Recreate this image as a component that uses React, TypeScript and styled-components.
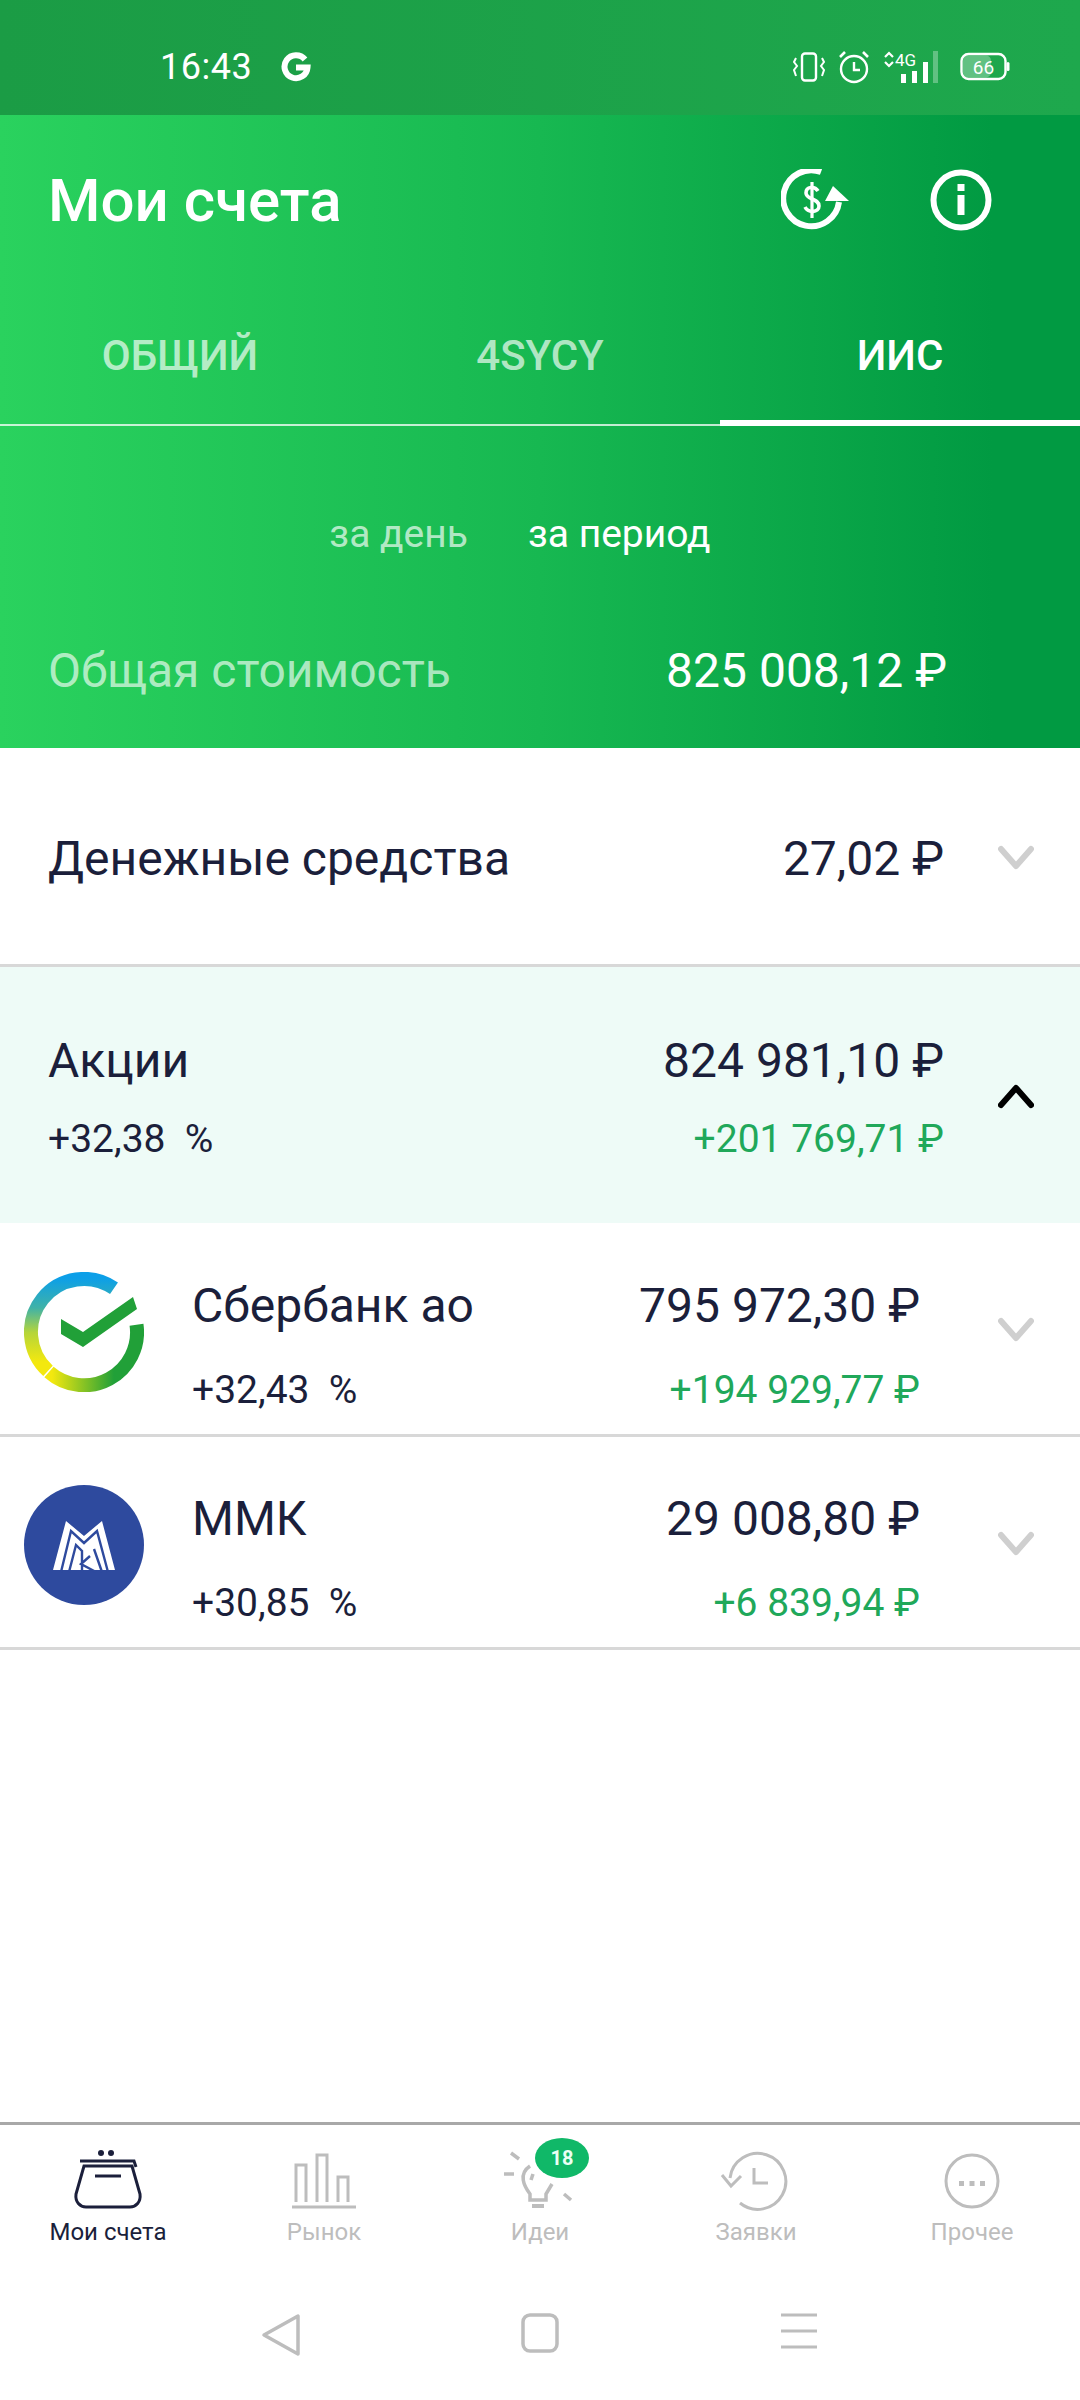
import React from "react";
import styled, { createGlobalStyle } from "styled-components";

const GlobalStyle = createGlobalStyle`
  html, body {
    margin: 0;
    padding: 0;
    background: #fff;
    font-family: Roboto, "Noto Sans", sans-serif;
  }
  * { box-sizing: border-box; }
`;

const Page = styled.div`
  width: 1080px;
  height: 2400px;
  display: flex;
  flex-direction: column;
  background: #fff;
  color: #1b1f3b;
  overflow: hidden;
`;

const StatusBar = styled.div`
  height: 115px;
  flex: none;
  display: flex;
  align-items: center;
  justify-content: space-between;
  padding: 18px 70px 0 160px;
  color: #fff;
  background: linear-gradient(90deg, #1b9c45, #1ea84d);
`;
const StatusLeft = styled.div`
  display: flex;
  align-items: center;
  gap: 29px;
  font-size: 36px;
  letter-spacing: 0.5px;
`;
const StatusRight = styled.div`
  display: flex;
  align-items: center;
  gap: 13px;
`;

const Header = styled.div`
  height: 633px;
  flex: none;
  display: flex;
  flex-direction: column;
  color: #fff;
  background: linear-gradient(90deg, #2ad25e 0%, #17b851 50%, #019a42 92%);
`;
const TitleRow = styled.div`
  height: 170px;
  display: flex;
  align-items: center;
  justify-content: space-between;
  padding: 0 88px 0 48px;
`;
const Title = styled.h1`
  margin: 0;
  font-size: 60px;
  font-weight: 500;
`;
const TitleIcons = styled.div`
  display: flex;
  align-items: center;
  gap: 79px;
`;
const Tabs = styled.div`
  height: 141px;
  display: grid;
  grid-template-columns: repeat(3, 1fr);
  border-bottom: 2px solid rgba(255, 255, 255, 0.75);
`;
const Tab = styled.div<{ $active?: boolean }>`
  display: flex;
  align-items: center;
  justify-content: center;
  height: 141px;
  font-size: 42px;
  font-weight: 500;
  color: ${({ $active }) => ($active ? "#fff" : "rgba(255,255,255,0.68)")};
  box-shadow: ${({ $active }) => ($active ? "inset 0 -6px 0 #fff" : "none")};
`;
const Periods = styled.div`
  display: flex;
  justify-content: center;
  gap: 60px;
  padding: 87px 40px 0 0;
  font-size: 39px;
  line-height: 42px;
`;
const Period = styled.span<{ $active?: boolean }>`
  color: ${({ $active }) => ($active ? "#fff" : "rgba(255,255,255,0.68)")};
`;
const TotalRow = styled.div`
  display: flex;
  justify-content: space-between;
  align-items: center;
  padding: 90px 133px 0 48px;
  font-size: 48px;
  line-height: 52px;
`;
const TotalLabel = styled.span`
  color: rgba(255, 255, 255, 0.65);
`;

const Row = styled.div<{ $tint?: boolean; $height: number; $border?: boolean; $pushDown?: number }>`
  height: ${({ $height }) => $height}px;
  flex: none;
  display: flex;
  align-items: center;
  padding-top: ${({ $pushDown }) => $pushDown ?? 0}px;
  background: ${({ $tint }) => ($tint ? "#eefbf7" : "#fff")};
  border-bottom: ${({ $border }) => ($border ? "3px solid #d8d8d8" : "none")};
`;
const Logo = styled.div`
  width: 120px;
  height: 120px;
  margin: -26px 0 0 24px;
  flex: none;
`;
const RowBody = styled.div<{ $gap: number }>`
  flex: 1;
  display: flex;
  flex-direction: column;
  gap: ${({ $gap }) => $gap}px;
  padding-left: 48px;
`;
const RowLine = styled.div`
  display: flex;
  justify-content: space-between;
  align-items: center;
`;
const Main = styled.span`
  font-size: 48px;
  line-height: 54px;
`;
const Sub = styled.span<{ $green?: boolean }>`
  font-size: 39px;
  line-height: 42px;
  color: ${({ $green }) => ($green ? "#20a85a" : "#1b1f3b")};
  white-space: pre;
`;
const ChevronBox = styled.div<{ $wide?: boolean }>`
  width: ${({ $wide }) => ($wide ? "160px" : "136px")};
  flex: none;
  display: flex;
  justify-content: center;
  padding-left: ${({ $wide }) => ($wide ? "32px" : "8px")};
  margin-top: ${({ $wide }) => ($wide ? "-29px" : "-2px")};
`;

const Spacer = styled.div`
  flex: 1;
`;

const BottomNav = styled.div`
  flex: none;
  height: 155px;
  display: grid;
  grid-template-columns: repeat(5, 1fr);
  border-top: 3px solid #a8a8a8;
  padding-top: 23px;
`;
const NavItem = styled.div<{ $active?: boolean }>`
  position: relative;
  display: flex;
  flex-direction: column;
  align-items: center;
  gap: 3px;
  font-size: 24px;
  line-height: 30px;
  color: ${({ $active }) => ($active ? "#1b1f3b" : "#bdbdbd")};
`;
const Badge = styled.span`
  position: absolute;
  left: 103px;
  top: -10px;
  width: 54px;
  height: 40px;
  border-radius: 50%;
  display: flex;
  align-items: center;
  justify-content: center;
  background: #10b868;
  color: #eafff4;
  font-size: 20px;
  font-weight: 700;
`;
const SystemBar = styled.div`
  flex: none;
  height: 123px;
  display: grid;
  grid-template-columns: repeat(3, 180px);
  justify-content: center;
  gap: 79px;
  justify-items: center;
  padding-top: 36px;
`;

const GoogleG = () => (
  <svg width="30" height="30" viewBox="0 0 30 30" fill="none" stroke="#fff" strokeWidth="6">
    <path d="M24 7.5 A11.5 11.5 0 1 0 26.5 15.5 H15" />
  </svg>
);

const Chevron = ({ up, dark }: { up?: boolean; dark?: boolean }) => (
  <svg width="36" height="26" viewBox="0 0 36 26">
    <path
      d={up ? "M3 22 L18 5 L33 22" : "M3 4 L18 21 L33 4"}
      fill="none"
      stroke={dark ? "#000" : "#cfcfcf"}
      strokeWidth="6"
      strokeLinecap="round"
      strokeLinejoin="round"
    />
  </svg>
);

const RefreshDollar = () => (
  <svg width="70" height="62" viewBox="0 0 70 62">
    <path d="M40 3 A28 28 0 1 0 58 33" fill="none" stroke="#fff" strokeWidth="6" />
    <path d="M52 17 L68 32 L44 32 Z" fill="#fff" />
    <path d="M37 22 C34 17 25 17 25 24 C25 31 38 29 38 37 C38 44 27 44 24 38" fill="none" stroke="#fff" strokeWidth="3.6" />
    <path d="M31 13 V49" stroke="#fff" strokeWidth="3.2" />
  </svg>
);

const InfoCircle = () => (
  <svg width="62" height="62" viewBox="0 0 62 62">
    <circle cx="31" cy="31" r="27.5" fill="none" stroke="#fff" strokeWidth="6" />
    <rect x="27.5" y="15" width="7" height="7" fill="#fff" />
    <rect x="27.5" y="26" width="7" height="20" fill="#fff" />
  </svg>
);

const StatusIcons = () => (
  <>
    <svg width="32" height="30" viewBox="0 0 32 30" fill="none" stroke="#fff">
      <rect x="9" y="1.5" width="14" height="27" rx="3" strokeWidth="2.4" />
      <path d="M3 6 L1 10 L4 14 L1 18 L3 24 M29 6 L31 10 L28 14 L31 18 L29 24" strokeWidth="2" />
    </svg>
    <svg width="32" height="34" viewBox="0 0 32 34" fill="none" stroke="#fff">
      <circle cx="16" cy="19" r="13" strokeWidth="2.4" />
      <path d="M16 12 V20 H22" strokeWidth="2.4" />
      <path d="M2 7 L7 2 M30 7 L25 2" strokeWidth="2.6" />
    </svg>
    <svg width="56" height="34" viewBox="0 0 56 34">
      <path d="M2 7 L6 3 L10 7 M2 12 L6 16 L10 12" fill="none" stroke="#fff" strokeWidth="2.2" />
      <text x="12" y="16" fontSize="17" fill="#fff" fontFamily="Roboto, sans-serif">4G</text>
      <rect x="18" y="24" width="5" height="9" fill="#fff" />
      <rect x="29" y="21" width="5" height="12" fill="#fff" />
      <rect x="40" y="12" width="5" height="21" fill="#fff" />
      <rect x="50" y="1" width="5" height="32" fill="rgba(255,255,255,0.3)" />
    </svg>
    <svg width="50" height="30" viewBox="0 0 50 30" style={{ marginLeft: 8 }}>
      <rect x="1.5" y="2" width="44" height="25" rx="7" fill="none" stroke="#fff" strokeWidth="2.4" />
      <rect x="3" y="3.5" width="28" height="22" rx="5" fill="rgba(255,255,255,0.3)" />
      <rect x="46.5" y="10" width="3" height="9" rx="1.5" fill="#fff" />
      <text x="23.5" y="21.5" fontSize="19" textAnchor="middle" fill="#fff" fontFamily="Roboto, sans-serif">66</text>
    </svg>
  </>
);

const SberLogo = () => (
  <svg width="120" height="120" viewBox="0 0 120 120" fill="none">
    <defs>
      <linearGradient id="sberLeft" gradientUnits="userSpaceOnUse" x1="60" y1="6" x2="60" y2="105">
        <stop offset="0" stopColor="#0c9fe8" />
        <stop offset="0.3" stopColor="#3fb2a8" />
        <stop offset="0.55" stopColor="#b5d53a" />
        <stop offset="0.85" stopColor="#f3e80f" />
        <stop offset="1" stopColor="#f3e80f" />
      </linearGradient>
      <linearGradient id="sberRight" gradientUnits="userSpaceOnUse" x1="28" y1="0" x2="90" y2="0">
        <stop offset="0" stopColor="#f3e80f" />
        <stop offset="1" stopColor="#21a038" />
      </linearGradient>
    </defs>
    <path d="M90 16.3 A53 53 0 0 0 24 98.9" stroke="url(#sberLeft)" strokeWidth="14" />
    <path d="M25 100 A53 53 0 0 0 112.5 52.7" stroke="url(#sberRight)" strokeWidth="14" />
    <path d="M37 47 L59 60 L109 25 L113 37 L59 75 L37 62 Z" fill="#21a038" />
  </svg>
);

const MmkLogo = () => (
  <svg width="120" height="120" viewBox="0 0 120 120">
    <circle cx="60" cy="60" r="60" fill="#2e4a9e" />
    <path d="M29 85 L42 36 L60 51 L78 36 L91 85 Z" fill="#fff" />
    <path d="M37 87 L47 46 L60 58 L73 46 L84 87" fill="none" stroke="#2e4a9e" strokeWidth="2.4" />
    <path d="M45 87 L52 60 L58 66 V87 M66 71 L57 79 L72 87 M70 64 L78 87" fill="none" stroke="#2e4a9e" strokeWidth="2.4" />
  </svg>
);

const WalletIcon = () => (
  <svg width="72" height="66" viewBox="0 0 72 66" fill="none" stroke="#1b1f3b">
    <circle cx="29" cy="5" r="3" fill="#1b1f3b" stroke="none" />
    <circle cx="39" cy="5" r="3" fill="#1b1f3b" stroke="none" />
    <path d="M8 13 H62 L64 19" strokeWidth="3" />
    <path d="M12 18 H60 L68 46 C69 54 64 59 58 59 H14 C8 59 3 54 4 46 Z" strokeWidth="3" />
    <path d="M23 28 H49" strokeWidth="3" />
  </svg>
);

const MarketIcon = () => (
  <svg width="72" height="66" viewBox="0 0 72 66" fill="none" stroke="#bdbdbd" strokeWidth="3">
    <path d="M8 54 V17 H18 V54 M29 54 V7 H39 V54 M50 54 V29 H60 V54" />
    <path d="M4 59 H68" />
  </svg>
);

const IdeaIcon = () => (
  <svg width="72" height="66" viewBox="0 0 72 66" fill="none" stroke="#bdbdbd" strokeWidth="3.5">
    <path d="M26 18 C14 26 20 38 26 46 V52 H42 V46 L48 36" />
    <path d="M28 58 H40" strokeWidth="4" />
    <path d="M7 5 L15 11 M0 26 H10 M60 46 L67 52" />
    <path d="M29 26 L27 32" />
  </svg>
);

const HistoryIcon = () => (
  <svg width="72" height="66" viewBox="0 0 72 66" fill="none" stroke="#bdbdbd" strokeWidth="3">
    <path d="M10 30 A28 28 0 1 1 20 55" />
    <path d="M2 27 L11 38 L21 28" />
    <path d="M34 20 V35 H48" />
  </svg>
);

const MoreIcon = () => (
  <svg width="72" height="66" viewBox="0 0 72 66" fill="none" stroke="#bdbdbd" strokeWidth="3">
    <circle cx="36" cy="33" r="26" />
    <rect x="23" y="33" width="5" height="5" fill="#bdbdbd" stroke="none" />
    <rect x="33.5" y="33" width="5" height="5" fill="#bdbdbd" stroke="none" />
    <rect x="44" y="33" width="5" height="5" fill="#bdbdbd" stroke="none" />
  </svg>
);

const BackButton = () => (
  <svg width="40" height="44" viewBox="0 0 40 44" fill="none" stroke="#bdbdbd" strokeWidth="3.5" strokeLinejoin="round">
    <path d="M37 3 V41 L3 22 Z" />
  </svg>
);
const HomeButton = () => (
  <svg width="38" height="40" viewBox="0 0 38 40" fill="none" stroke="#bdbdbd" strokeWidth="3.5">
    <rect x="2" y="2" width="34" height="36" rx="7" />
  </svg>
);
const MenuButton = () => (
  <svg width="38" height="36" viewBox="0 0 38 36" fill="none" stroke="#bdbdbd" strokeWidth="3">
    <path d="M1 2 H37 M1 18 H37 M1 34 H37" />
  </svg>
);

const App: React.FC = () => {
  return (
    <Page>
      <GlobalStyle />
      <StatusBar>
        <StatusLeft>
          <span>16:43</span>
          <GoogleG />
        </StatusLeft>
        <StatusRight>
          <StatusIcons />
        </StatusRight>
      </StatusBar>

      <Header>
        <TitleRow>
          <Title>Мои счета</Title>
          <TitleIcons>
            <RefreshDollar />
            <InfoCircle />
          </TitleIcons>
        </TitleRow>
        <Tabs>
          <Tab>ОБЩИЙ</Tab>
          <Tab>4SYCY</Tab>
          <Tab $active>ИИС</Tab>
        </Tabs>
        <Periods>
          <Period>за день</Period>
          <Period $active>за период</Period>
        </Periods>
        <TotalRow>
          <TotalLabel>Общая стоимость</TotalLabel>
          <span>825 008,12 ₽</span>
        </TotalRow>
      </Header>

      <Row $height={219} $border $pushDown={6}>
        <RowBody $gap={0}>
          <RowLine>
            <Main>Денежные средства</Main>
            <Main>27,02 ₽</Main>
          </RowLine>
        </RowBody>
        <ChevronBox><Chevron /></ChevronBox>
      </Row>
      <Row $height={256} $tint $pushDown={3}>
        <RowBody $gap={30}>
          <RowLine>
            <Main>Акции</Main>
            <Main>824 981,10 ₽</Main>
          </RowLine>
          <RowLine>
            <Sub>+32,38  %</Sub>
            <Sub $green>+201 769,71 ₽</Sub>
          </RowLine>
        </RowBody>
        <ChevronBox><Chevron up dark /></ChevronBox>
      </Row>
      <Row $height={214} $border $pushDown={32}>
        <Logo><SberLogo /></Logo>
        <RowBody $gap={36}>
          <RowLine>
            <Main>Сбербанк ао</Main>
            <Main>795 972,30 ₽</Main>
          </RowLine>
          <RowLine>
            <Sub>+32,43  %</Sub>
            <Sub $green>+194 929,77 ₽</Sub>
          </RowLine>
        </RowBody>
        <ChevronBox $wide><Chevron /></ChevronBox>
      </Row>
      <Row $height={213} $border $pushDown={32}>
        <Logo><MmkLogo /></Logo>
        <RowBody $gap={36}>
          <RowLine>
            <Main>ММК</Main>
            <Main>29 008,80 ₽</Main>
          </RowLine>
          <RowLine>
            <Sub>+30,85  %</Sub>
            <Sub $green>+6 839,94 ₽</Sub>
          </RowLine>
        </RowBody>
        <ChevronBox $wide><Chevron /></ChevronBox>
      </Row>

      <Spacer />

      <BottomNav>
        <NavItem $active><WalletIcon />Мои счета</NavItem>
        <NavItem><MarketIcon />Рынок</NavItem>
        <NavItem><IdeaIcon /><Badge>18</Badge>Идеи</NavItem>
        <NavItem><HistoryIcon />Заявки</NavItem>
        <NavItem><MoreIcon />Прочее</NavItem>
      </BottomNav>
      <SystemBar>
        <BackButton />
        <HomeButton />
        <MenuButton />
      </SystemBar>
    </Page>
  );
};

export default App;
